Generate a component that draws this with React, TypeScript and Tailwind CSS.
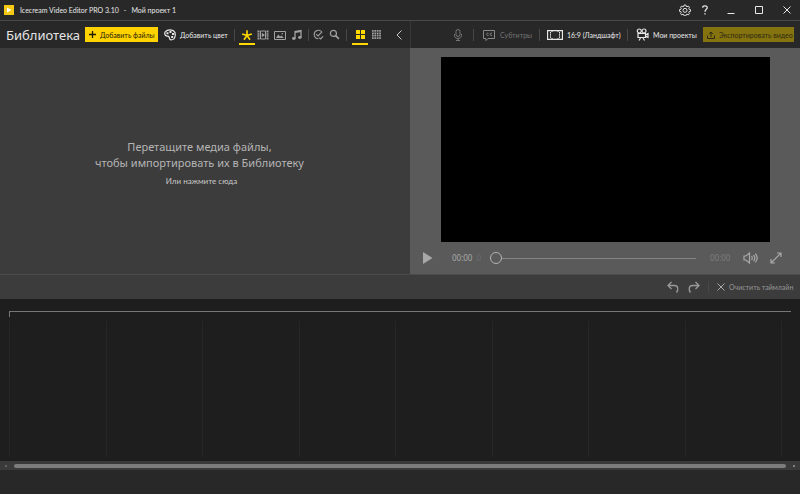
import React from 'react';
import clsx from 'clsx';

type IconProps = { className?: string; children: React.ReactNode; viewBox?: string };

const Icon: React.FC<IconProps> = ({ className, children, viewBox = '0 0 12 12' }) => (
  <svg
    viewBox={viewBox}
    className={clsx('shrink-0', className)}
    fill="none"
    stroke="currentColor"
    strokeWidth="1"
    aria-hidden="true"
  >
    {children}
  </svg>
);

const Divider: React.FC<{ className?: string }> = ({ className }) => (
  <span className={clsx('h-3 w-px shrink-0 bg-[#484848]', className)} />
);

type ToolProps = {
  label: string;
  active?: boolean;
  children: React.ReactNode;
};

const Tool: React.FC<ToolProps> = ({ label, active, children }) => (
  <button
    type="button"
    aria-label={label}
    className={clsx(
      'flex h-5 w-4 shrink-0 items-center justify-center border-b-2 pt-[2px]',
      active ? 'border-[#ffd800] text-[#ffd800]' : 'border-transparent text-[#a0a0a0]',
    )}
  >
    {children}
  </button>
);

const TitleBar: React.FC = () => (
  <header className="flex h-[21px] items-center border-b border-[#4a4a4a] pr-[7px] pl-1 text-[#e8e8e8]">
    <Icon className="size-[10px]" viewBox="0 0 10 10">
      <path d="M0 0h10v10H0z" fill="#f5c914" stroke="none" />
      <path d="M3 2.500v5L7.500 5z" fill="#fff" stroke="none" />
    </Icon>
    <h1 className="ml-[6px] flex gap-[5px] text-[7px] whitespace-nowrap">
      <span>Icecream Video Editor PRO 3.10</span>
      <span>-</span>
      <span>Мой проект 1</span>
    </h1>
    <div className="ml-auto flex items-center">
      <button type="button" aria-label="Настройки" className="mr-2">
        <Icon className="size-3" viewBox="0 0 24 24">
          <path
            strokeWidth="1.9"
            strokeLinejoin="round"
            d="M10.3 2h3.4l.6 2.7 1.8.8 2.4-1.5 2.4 2.4-1.4 2.4.7 1.8 2.8.6v3.5l-2.8.6-.7 1.8 1.4 2.3-2.4 2.5-2.4-1.5-1.8.8-.6 2.7h-3.4l-.6-2.7-1.8-.8-2.4 1.5-2.4-2.5 1.4-2.3-.7-1.8-2.8-.6v-3.5l2.8-.6.7-1.8-1.4-2.4 2.4-2.4 2.4 1.5 1.8-.8z"
          />
          <circle cx="12" cy="12.7" r="4" strokeWidth="1.9" />
        </Icon>
      </button>
      <button type="button" aria-label="Справка" className="mr-[14px] w-3">
        <Icon className="mx-auto h-[10px] w-2" viewBox="0 0 8 10">
          <path strokeWidth="1.3" d="M1.6 2.6C1.8.2 6.3.2 6.2 2.7 6.2 4.4 4 4.3 4 6.8" />
          <path strokeWidth="1.4" d="M4 8.2v1.4" />
        </Icon>
      </button>
      <button type="button" aria-label="Свернуть" className="mr-4 w-3">
        <Icon className="size-3">
          <path d="M2.5 9.5h7" />
        </Icon>
      </button>
      <button type="button" aria-label="Развернуть" className="mr-4 w-3">
        <Icon className="size-3">
          <path d="M2.5 2.5h7v7h-7z" />
        </Icon>
      </button>
      <button type="button" aria-label="Закрыть" className="w-3">
        <Icon className="size-3">
          <path d="M2.5 2.5l7 7m0-7l-7 7" />
        </Icon>
      </button>
    </div>
  </header>
);

const LibraryToolbar: React.FC = () => (
  <div className="flex h-[27px] items-center pr-2 pl-[6px]">
    <h2 className="w-[79px] shrink-0 font-['Noto_Sans','Open_Sans',sans-serif] text-[13px] leading-5 whitespace-nowrap text-[#e4e4e4]">
      Библиотека
    </h2>
    <button
      type="button"
      className="flex h-[15px] w-[73px] shrink-0 items-center bg-[#ffd200] pl-1 text-[7px] whitespace-nowrap text-[#1e1a00]"
    >
      <Icon className="mr-1 size-[7px]" viewBox="0 0 7 7">
        <path d="M3.5 0v7M0 3.5h7" strokeWidth="1.300" />
      </Icon>
      Добавить файлы
    </button>
    <button
      type="button"
      className="ml-[6px] flex w-[70px] shrink-0 items-center text-[7px] whitespace-nowrap text-[#e8e8e8]"
    >
      <Icon className="mr-1 size-3">
        <path
          strokeWidth="1.2"
          d="M1.2 2.8C2.8 1.1 5.5.8 7.5 1.1c2.6.5 4 2.9 3.7 5.4-.3 2.6-2.2 4.4-4.2 4.4-1.8 0-1.3-1.7-1.9-2.9-.7-1.3-2.4-.3-3.5-1.5C.7 5.5.6 3.9 1.2 2.8z"
        />
        <path fill="currentColor" stroke="none" d="M2.500 3.200h2v2h-2zM5.500 2h2v2h-2zM8 4h2v2H8zM7.200 7h2v2h-2z" />
      </Icon>
      Добавить цвет
    </button>
    <Divider className="mr-1" />
    <Tool label="Все" active>
      <Icon className="size-3">
        <path strokeWidth="1.6" d="M6 6.500V1.200M6 6.500l4.800-1.600M6 6.500l3 4.300M6 6.500l-3 4.300M6 6.500L1.200 4.900" />
      </Icon>
    </Tool>
    <Tool label="Видео">
      <Icon className="size-3">
        <path d="M1.500 1.500v9M10.500 1.500v9" strokeWidth="2" strokeDasharray="1.400 .5" />
        <path d="M3.500 2v8h5V2z" />
        <path d="M4.800 3.800v4.400L8 6z" fill="currentColor" stroke="none" />
      </Icon>
    </Tool>
    <Tool label="Изображения">
      <Icon className="ml-[2px] size-3">
        <path d="M.5 2.500h11v8H.5z" />
        <path d="M2 9l2.200-3.500L6 7.500l1.300-1L10 9z" fill="currentColor" stroke="none" />
        <circle cx="8.300" cy="4.700" r=".8" fill="currentColor" stroke="none" />
      </Icon>
    </Tool>
    <Tool label="Аудио">
      <Icon className="ml-[3px] size-3">
        <path d="M4 9.500V2.500L10 1.500V8.500M4 3.300l6-1" strokeWidth="1.3" />
        <ellipse cx="2.800" cy="9.500" rx="1.800" ry="1.400" fill="currentColor" stroke="none" />
        <ellipse cx="8.800" cy="8.500" rx="1.800" ry="1.400" fill="currentColor" stroke="none" />
      </Icon>
    </Tool>
    <Divider className="mr-px ml-[5px]" />
    <Tool label="Использованные">
      <Icon className="size-[11px]">
        <path d="M10 3.800A4.600 4.600 0 1 0 6 10.600" strokeWidth="1.200" />
        <path d="M3.500 5.500l2 2L9.500 3.500M6.800 9.300l1.500 1.500L11 8" strokeWidth="1.200" />
      </Icon>
    </Tool>
    <Tool label="Поиск">
      <Icon className="size-[11px]">
        <circle cx="4.800" cy="4.800" r="3.300" strokeWidth="1.300" />
        <path d="M7.200 7.200l3.600 3.600" strokeWidth="1.800" />
      </Icon>
    </Tool>
    <Divider className="mr-[5px] ml-1" />
    <Tool label="Плитка" active>
      <Icon className="size-[9px]" viewBox="0 0 9 9">
        <path fill="currentColor" stroke="none" d="M0 0h4v4H0zM5 0h4v4H5zM0 5h4v4H0zM5 5h4v4H5z" />
      </Icon>
    </Tool>
    <Tool label="Сетка">
      <Icon className="size-[9px]" viewBox="0 0 9 9">
        <path strokeDasharray="1.700 .7" strokeWidth="1.700" d="M0 .9h9M0 3.300h9M0 5.700h9M0 8.100h9" />
      </Icon>
    </Tool>
    <button type="button" aria-label="Скрыть панель" className="ml-auto text-[#c8c8c8]">
      <Icon className="h-[10px] w-[6px]" viewBox="0 0 6 10">
        <path d="M5.500.5L1 5l4.500 4.500" />
      </Icon>
    </button>
  </div>
);

const ProjectToolbar: React.FC = () => (
  <div className="flex h-[27px] items-center justify-end border-l border-[#383838] pr-[6px] text-[7px] whitespace-nowrap">
    <button type="button" aria-label="Запись голоса" className="text-[#777]">
      <Icon className="size-3">
        <rect x="4" y=".5" width="4" height="7" rx="2" />
        <path d="M2.500 5v1.500c0 4 7 4 7 0V5M6 9.500v2M4 11.500h4" />
      </Icon>
    </button>
    <Divider className="mr-[9px] ml-[9px]" />
    <button type="button" className="flex w-14 items-center text-[#747474]">
      <Icon className="mr-[5px] size-3 text-[#888]">
        <path d="M.5 1.500h11v8H5l-2 2v-2H.5z" />
        <path d="M5.500 4.300C3.500 3.300 2.500 6.800 5.500 6.500M9 4.300C7 3.300 6 6.800 9 6.500" />
      </Icon>
      Субтитры
    </button>
    <Divider className="mr-[7px]" />
    <button type="button" className="flex w-20 items-center text-[#e8e8e8]">
      <Icon className="mr-1 h-[10px] w-4" viewBox="0 0 16 10">
        <path d="M.5.500h15v9H.5z" strokeWidth="1.300" />
        <path d="M3.500 2v6M12.500 2v6" strokeDasharray="1.500 .7" />
        <path d="M5 1v1M11 1v1M5 8v1M11 8v1" />
      </Icon>
      16:9 (Ландшафт)
    </button>
    <Divider className="mr-2" />
    <button type="button" className="flex w-[67px] items-center text-[#e8e8e8]">
      <Icon className="mr-1 size-[13px]" viewBox="0 0 13 13">
        <circle cx="3.300" cy="3" r="2" strokeWidth="1.200" />
        <circle cx="8" cy="3" r="2" strokeWidth="1.200" />
        <path d="M2 5.500h7.500v4H2zM9.500 7l2.500-1.500v4L9.500 8M4.500 10L3 12.500M7 10l1.500 2.500" strokeWidth="1.200" />
      </Icon>
      Мои проекты
    </button>
    <button
      type="button"
      className="flex h-[15px] w-[91px] items-center bg-[#85730f] pl-1 text-[#2f2a12]"
    >
      <Icon className="mr-1 size-2" viewBox="0 0 8 8">
        <path d="M.5 4.500v3h7v-3M4 6V1M2 3l2-2 2 2" />
      </Icon>
      Экспортировать видео
    </button>
  </div>
);

const Library: React.FC = () => (
  <section className="flex grow flex-col bg-[#3c3c3c]">
    <button
      type="button"
      className="flex grow flex-col items-center justify-center pt-[6px] pr-[11px] text-[#b4b4b4]"
    >
      <span className="font-['Noto_Sans','Open_Sans',sans-serif] text-[11px] leading-4">
        Перетащите медиа файлы,
      </span>
      <span className="font-['Noto_Sans','Open_Sans',sans-serif] text-[11px] leading-4">
        чтобы импортировать их в Библиотеку
      </span>
      <span className="mt-[2px] ml-1 text-[8px] leading-4 text-[#c8c8c8]">Или нажмите сюда</span>
    </button>
  </section>
);

const Preview: React.FC = () => (
  <section className="grow bg-[#5a5a5a] pt-[9px] pr-[30px] pl-[31px]">
    <div className="aspect-video w-full bg-black" />
    <div className="-mr-3 -ml-5 flex h-8 items-center font-['Noto_Sans','Open_Sans',sans-serif] text-[8px] text-[#a8a8a8]">
      <button type="button" aria-label="Воспроизвести">
        <Icon className="h-3 w-[14px]" viewBox="0 0 14 12">
          <path d="M2 0v12l9.500-6z" fill="currentColor" stroke="none" />
        </Icon>
      </button>
      <span className="ml-[17px] w-[38px]">
        00:00<span className="ml-[2px] text-[#6c6c6c]">.0</span>
      </span>
      <input
        type="range"
        aria-label="Позиция воспроизведения"
        min={0}
        max={100}
        defaultValue={0}
        className="h-3 min-w-0 grow appearance-none bg-transparent [&::-webkit-slider-runnable-track]:h-px [&::-webkit-slider-runnable-track]:bg-[#858585] [&::-webkit-slider-thumb]:-mt-[6px] [&::-webkit-slider-thumb]:size-3 [&::-webkit-slider-thumb]:appearance-none [&::-webkit-slider-thumb]:rounded-full [&::-webkit-slider-thumb]:border [&::-webkit-slider-thumb]:border-[#b4b4b4] [&::-webkit-slider-thumb]:bg-[#5a5a5a]"
      />
      <span className="ml-[14px] w-[33px] text-[#7c7c7c]">00:00</span>
      <button type="button" aria-label="Громкость">
        <Icon className="h-3 w-[15px]" viewBox="0 0 15 12">
          <path
            strokeWidth="1.200"
            d="M1 4h2l3.500-3v10L3 8H1zM8.500 4.200c1 1 1 2.700 0 3.700M10.500 3c1.700 2 1.700 4.200 0 6.200M12.300 1.700c2.400 2.800 2.400 6 0 8.700"
          />
        </Icon>
      </button>
      <button type="button" aria-label="Полный экран" className="ml-3">
        <Icon className="size-3">
          <path d="M1 11L11 1M7 1h4v4M1 7v4h4" strokeWidth="1.200" />
        </Icon>
      </button>
    </div>
  </section>
);

const TimelineToolbar: React.FC = () => (
  <div className="flex h-[25px] items-center justify-end border-t border-[#4b4b4b] bg-[#3c3c3c] pr-2 text-[7px] text-[#969696]">
    <button type="button" aria-label="Отменить" className="mr-[9px] text-[#999]">
      <Icon className="size-3">
        <path strokeWidth="1.300" d="M4.500 1L1 4.500 4.500 8M1 4.500h6.500c4 0 4 4.500 2 7" />
      </Icon>
    </button>
    <button type="button" aria-label="Повторить" className="mr-2 text-[#999]">
      <Icon className="size-3">
        <path strokeWidth="1.300" d="M7.500 1L11 4.500 7.500 8M11 4.500H4.500c-4 0-4 4.500-2 7" />
      </Icon>
    </button>
    <Divider className="mr-2 bg-[#555]" />
    <button type="button" className="flex w-[75px] items-center whitespace-nowrap">
      <Icon className="mr-1 size-2 text-[#aaa]" viewBox="0 0 8 8">
        <path d="M.5.500l7 7m0-7l-7 7" />
      </Icon>
      Очистить таймлайн
    </button>
  </div>
);

const Timeline: React.FC = () => (
  <section className="flex grow flex-col bg-[#1e1e1e] px-[9px] pt-3">
    <div className="h-[6px] border-t border-l border-[#777]" />
    <div className="mt-1 mb-1 flex grow">
      {Array.from({ length: 8 }, (_, i) => (
        <div key={i} className="flex-1 border-l border-[#262626]" />
      ))}
      <div className="w-[10px] border-l border-[#262626]" />
    </div>
  </section>
);

const App: React.FC = () => (
  <div className="flex min-h-screen flex-col bg-[#282828] font-[Lato,Roboto,sans-serif] leading-3">
    <TitleBar />
    <main className="flex grow flex-col">
      <div className="grid grid-cols-[41fr_39fr]">
        <div className="flex min-w-0 flex-col">
          <LibraryToolbar />
          <Library />
        </div>
        <div className="flex min-w-0 flex-col">
          <ProjectToolbar />
          <Preview />
        </div>
      </div>
      <TimelineToolbar />
      <Timeline />
      <div className="flex h-[9px] items-center justify-between bg-[#3a3a3a] px-[5px]">
        <span className="size-[2px] bg-[#606060]" />
        <span className="mx-[7px] h-1 grow rounded-full bg-[#7c7c7c]" />
        <span className="size-[2px] bg-[#808080]" />
      </div>
    </main>
    <footer className="h-6" />
  </div>
);

export default App;
